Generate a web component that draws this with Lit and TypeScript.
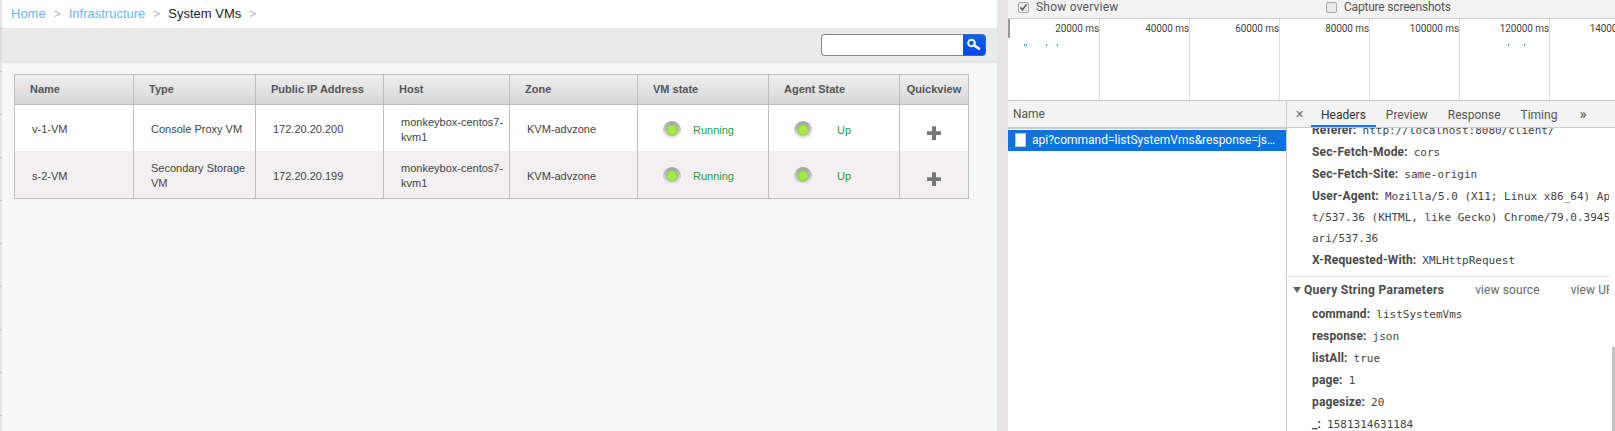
import { LitElement, html, css, svg } from "lit";
import { customElement } from "lit/decorators.js";

const rows = [
  { name: "v-1-VM", type: "Console Proxy VM", ip: "172.20.20.200" },
  { name: "s-2-VM", type: "Secondary Storage VM", ip: "172.20.20.199" },
];
const heads = ["Name", "Type", "Public IP Address", "Host", "Zone", "VM state", "Agent State", "Quickview"];
const ticks = ["20000 ms", "40000 ms", "60000 ms", "80000 ms", "100000 ms", "120000 ms", "140000 ms"];
const headers: [string, string][] = [
  ["Sec-Fetch-Mode:", "cors"],
  ["Sec-Fetch-Site:", "same-origin"],
];
const params: [string, string][] = [
  ["command:", "listSystemVms"],
  ["response:", "json"],
  ["listAll:", "true"],
  ["page:", "1"],
  ["pagesize:", "20"],
  ["_:", "1581314631184"],
];

const searchIcon = svg`<svg width="16" height="14" viewBox="0 0 16 14"><circle cx="5.5" cy="5" r="3.3" fill="none" stroke="#fff" stroke-width="2"/><path d="M8 7.2l5 3.4" stroke="#fff" stroke-width="2.6" stroke-linecap="round"/></svg>`;
const plusIcon = svg`<svg width="14" height="14" viewBox="0 0 14 14"><path d="M5 0h4v5h5v4H9v5H5V9H0V5h5z" fill="#777"/><path d="M5 0h4v1H5zM0 5h5v1H0zM9 5h5v1H9z" fill="#999"/></svg>`;
const checkIcon = svg`<svg width="9" height="9" viewBox="0 0 9 9"><path d="M1.5 4.5l2 2.3L7.6 1.4" fill="none" stroke="#555" stroke-width="1.5"/></svg>`;

@customElement("app-root")
export class AppRoot extends LitElement {
  static styles = css`
    :host { display: flex; width: 1615px; height: 431px; overflow: hidden; background: #f7f7f7; font-family: "Liberation Sans", Arial, sans-serif; }
    .strip { width: 2px; flex: none; background: linear-gradient(to bottom, #e6e4e4 0 42px, #c9c9c9 42px 43px) 0 -14px / 100% 43px; }
    .page { width: 995px; flex: none; background: #f7f7f7; }
    .crumbs { height: 28px; background: #fff; display: flex; align-items: center; padding: 0 0 1px 9px; font-size: 13px; box-sizing: border-box; }
    .crumbs a { color: #6db4f7; }
    .crumbs b { font-weight: 400; color: #b5b5b5; margin: 0 8px; font-size: 12px; }
    .crumbs span { color: #222; }
    .toolbar { height: 33px; background: #eaeaea; box-shadow: 0 1px 3px rgba(0,0,0,.14); display: flex; justify-content: flex-end; align-items: center; padding-right: 11px; }
    .search { display: flex; height: 22px; margin-top: 1px; }
    .search .field { width: 142px; box-sizing: border-box; background: #fff; border: 1px solid #8d8184; border-right: none; border-radius: 4px 0 0 4px; }
    .search .btn { width: 23px; box-sizing: border-box; background: linear-gradient(#0b60e6, #0046ee); border: 1px solid #3c6cb8; border-left: none; border-radius: 0 4px 4px 0; display: flex; align-items: center; justify-content: center; }
    .table { margin: 13px 0 0 12px; width: 955px; border: 1px solid #bfbdbd; box-sizing: border-box; font-size: 11px; background: #fff; }
    .row { display: grid; grid-template-columns: 119px 122px 128px 126px 128px 131px 131px 1fr; }
    .head { height: 30px; background: linear-gradient(#efefef, #d8d6d6); border-bottom: 1px solid #bfbdbd; box-sizing: border-box; font-weight: 700; color: #555; }
    .head > div { border-right: 1px solid #bfbdbd; padding-left: 15px; line-height: 29px; }
    .head > div:last-child { border-right: none; padding: 0; text-align: center; }
    .body { height: 46px; color: #444; }
    .body.alt { background: #f2f0f0; height: 47px; }
    .body > div { border-right: 1px solid #bfbdbd; padding: 3px 3px 0 17px; display: flex; align-items: center; line-height: 15px; }
    .body > div:last-child { border-right: none; justify-content: center; padding: 9px 0 0 0; }
    .body > .st { padding: 3px 0 0 25px; color: #1a9e4c; }
    .dot { width: 18px; height: 18px; border-radius: 50%; background: radial-gradient(circle at 50% 50%, #a4ec40 0 3px, #8fe235 5px, rgba(150,150,150,.5) 5.6px, transparent 7px), linear-gradient(#a0a0a0, #f4f4f4); flex: none; }
    .st .t { margin: 1px 0 0 12px; }
    .st .t.up { margin-left: 25px; }
    .gutter { width: 11px; flex: none; background: #e6e4e4; }

    .dev { flex: 1; min-width: 0; background: #fff; font-family: Roboto, "Noto Sans", sans-serif; color: #555; font-size: 12px; display: flex; flex-direction: column; }
    .top { height: 19px; flex: none; background: #f3f3f3; box-sizing: border-box; border-bottom: 1px solid #ccc; display: flex; align-items: center; padding: 0 0 4px 10px; letter-spacing: .22px; overflow: hidden; }
    .cb { width: 9px; height: 9px; border: 1px solid #aaa; border-radius: 2px; background: #e8e8e8; margin-right: 7px; display: flex; flex: none; }
    .show { width: 308px; flex: none; display: flex; align-items: center; }
    .show.tight { width: auto; letter-spacing: -.2px; }
    .over { height: 82px; flex: none; display: flex; border-bottom: 1px solid #ccc; box-sizing: border-box; position: relative; overflow: hidden; padding-left: 2px; }
    .over::before { content: ""; position: absolute; left: 0; top: 0; width: 2px; height: 19px; background: #999; }
    .over .c { width: 90px; flex: none; box-sizing: border-box; border-right: 1px solid #ddd; text-align: right; padding: 4px 0 0 0; font-size: 10px; letter-spacing: -.1px; color: #444; white-space: nowrap; }
    .dotm { position: absolute; top: 25px; width: 1px; height: 2px; background: #18a4d8; }
    .split { flex: 1; display: flex; min-height: 0; }
    .names { width: 279px; flex: none; border-right: 1px solid #ccc; box-sizing: border-box; }
    .nh { height: 28px; background: #f3f3f3; border-bottom: 2px solid #ccc; line-height: 27px; padding-left: 5px; box-sizing: border-box; }
    .req { height: 21px; background: #0a73e0; color: #fff; display: flex; align-items: center; padding: 0 6px 1px 7px; white-space: nowrap; box-sizing: border-box; margin-top: 1px; }
    .req i { width: 9px; height: 12px; background: #fff; border: 1px solid #bcd; margin-right: 6px; display: block; flex: none; }
    .req span { overflow: hidden; text-overflow: ellipsis; }
    .detail { flex: 1; min-width: 0; display: flex; flex-direction: column; }
    .tabs { height: 27px; flex: none; background: #f3f3f3; border-bottom: 1px solid #ccc; box-sizing: border-box; display: flex; align-items: center; margin-bottom: -1px; position: relative; }
    .tabs .x { width: 24px; text-align: center; font-size: 11px; color: #666; padding-top: 1px; }
    .tab { padding: 1px 10px 0; height: 26px; line-height: 27px; box-sizing: border-box; }
    .tab.on { border-bottom: 2px solid #1a73e8; color: #333; }
    .tabs .more { margin-left: 12px; font-size: 15px; }
    .scroll { flex: 1; overflow: hidden; margin-right: 3px; }
    .inner { margin-top: -8px; }
    .kv { padding-left: 25px; line-height: 22px; height: 22px; white-space: nowrap; }
    .kv b { font-weight: 700; color: #4a4a4a; margin-right: 6px; letter-spacing: .15px; }
    code { font-family: "DejaVu Sans Mono", monospace; font-size: 11px; color: #444; }
    .kv.ln { height: 21px; line-height: 21px; }
    .sep { border-top: 1px solid #ddd; margin-top: 5px; }
    .qs { height: 26px; display: flex; align-items: center; padding-left: 6px; font-weight: 700; color: #4a4a4a; white-space: nowrap; letter-spacing: .3px; }
    .tri { width: 0; height: 0; border: 4px solid transparent; border-top: 6px solid #666; border-bottom: 0; margin-right: 3px; }
    .qs .l { font-weight: 400; color: #666; margin-left: 31px; letter-spacing: .1px; }
    .thumbwrap { flex: none; width: 3px; }
    .thumb { height: 84px; margin-top: 220px; background: #c4c4c4; }
    .body2 { flex: 1; display: flex; min-height: 0; }
  `;

  render() {
    return html`
      <div class="strip"></div>
      <div class="page">
        <div class="crumbs"><a>Home</a><b>&gt;</b><a>Infrastructure</a><b>&gt;</b><span>System VMs</span><b>&gt;</b></div>
        <div class="toolbar">
          <div class="search"><div class="field"></div><div class="btn">${searchIcon}</div></div>
        </div>
        <div class="table">
          <div class="row head">${heads.map((h) => html`<div>${h}</div>`)}</div>
          ${rows.map(
            (r, i) => html`
              <div class="row body ${i ? "alt" : ""}">
                <div>${r.name}</div>
                <div>${r.type}</div>
                <div>${r.ip}</div>
                <div>monkeybox-centos7-kvm1</div>
                <div>KVM-advzone</div>
                <div class="st"><span class="dot"></span><span class="t">Running</span></div>
                <div class="st"><span class="dot"></span><span class="t up">Up</span></div>
                <div>${plusIcon}</div>
              </div>
            `
          )}
        </div>
      </div>
      <div class="gutter"></div>
      <div class="dev">
        <div class="top">
          <div class="show"><span class="cb">${checkIcon}</span>Show overview</div>
          <div class="show tight"><span class="cb"></span>Capture screenshots</div>
        </div>
        <div class="over">
          ${ticks.map((t) => html`<div class="c">${t}</div>`)}
          ${[16, 18, 38, 49, 500, 516].map((x) => html`<span class="dotm" style="left:${x}px"></span>`)}
        </div>
        <div class="split">
          <div class="names">
            <div class="nh">Name</div>
            <div class="req"><i></i><span>api?command=listSystemVms&amp;response=json&amp;listAll=true</span></div>
          </div>
          <div class="detail">
            <div class="tabs">
              <span class="x">✕</span>
              <span class="tab on">Headers</span><span class="tab">Preview</span><span class="tab">Response</span><span class="tab">Timing</span><span class="more">»</span>
            </div>
            <div class="body2">
              <div class="scroll">
                <div class="inner">
                  <div class="kv"><b>Referer:</b><code>http://localhost:8080/client/</code></div>
                  ${headers.map(([k, v]) => html`<div class="kv"><b>${k}</b><code>${v}</code></div>`)}
                  <div class="kv"><b>User-Agent:</b><code>Mozilla/5.0 (X11; Linux x86_64) Ap</code></div>
                  <div class="kv ln"><code>t/537.36 (KHTML, like Gecko) Chrome/79.0.3945</code></div>
                  <div class="kv ln"><code>ari/537.36</code></div>
                  <div class="kv"><b>X-Requested-With:</b><code>XMLHttpRequest</code></div>
                  <div class="sep"></div>
                  <div class="qs"><span class="tri"></span>Query String Parameters<span class="l">view source</span><span class="l">view URL encoded</span></div>
                  ${params.map(([k, v]) => html`<div class="kv"><b>${k}</b><code>${v}</code></div>`)}
                </div>
              </div>
              <div class="thumbwrap"><div class="thumb"></div></div>
            </div>
          </div>
        </div>
      </div>
    `;
  }
}
